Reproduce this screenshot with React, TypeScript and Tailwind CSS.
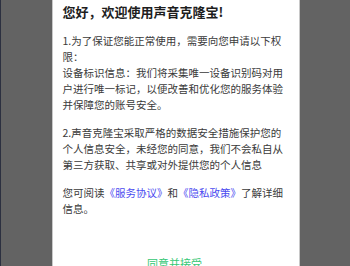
export default function App() {
  return (
    <div className="h-[266px] w-[350px] overflow-hidden bg-[#636363] border-l border-[#2c3040] flex justify-center font-['Noto_Sans_CJK_SC','Noto_Sans',sans-serif]">
      <div className="w-[248px] bg-white border-x border-[#c8c8c8] pl-[10px] pr-[12px] pt-[2px]">
        <h1 className="text-[13px] leading-[20px] font-bold text-[#1e1e1e]">
          您好，欢迎使用声音克隆宝!
        </h1>

        <div className="mt-[11px] text-[10.5px] leading-[16px] text-[#3a3a3a] space-y-[12px]">
          <p>
            1.为了保证您能正常使用，需要向您申请以下权限：
            <br />
            设备标识信息：我们将采集唯一设备识别码对用户进行唯一标记，以便改善和优化您的服务体验并保障您的账号安全。
          </p>
          <p>
            2.声音克隆宝采取严格的数据安全措施保护您的个人信息安全，未经您的同意，我们不会私自从第三方获取、共享或对外提供您的个人信息
          </p>
          <p>
            您可阅读<span className="text-[#4b4bf0]">《服务协议》</span>和<span className="text-[#4b4bf0]">《隐私政策》</span>了解详细信息。
          </p>
        </div>

        <div className="mt-[38px] text-center text-[11px] leading-[16px] text-[#35c774]">
          同意并接受
        </div>
      </div>
    </div>
  );
}
